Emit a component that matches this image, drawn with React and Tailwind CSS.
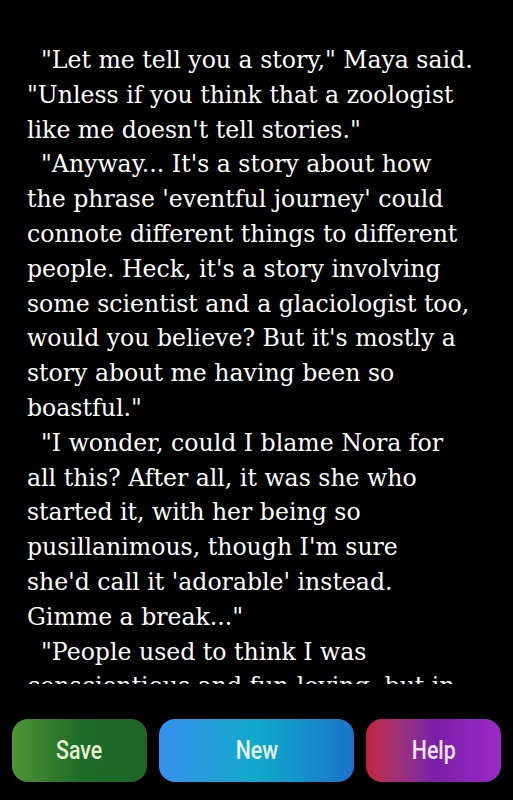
const lines = [
  { text: "\"Let me tell you a story,\" Maya said.", indent: true },
  { text: "\"Unless if you think that a zoologist" },
  { text: "like me doesn't tell stories.\"" },
  { text: "\"Anyway... It's a story about how", indent: true },
  { text: "the phrase 'eventful journey' could" },
  { text: "connote different things to different" },
  { text: "people. Heck, it's a story involving" },
  { text: "some scientist and a glaciologist too," },
  { text: "would you believe? But it's mostly a" },
  { text: "story about me having been so" },
  { text: "boastful.\"" },
  { text: "\"I wonder, could I blame Nora for", indent: true },
  { text: "all this? After all, it was she who" },
  { text: "started it, with her being so" },
  { text: "pusillanimous, though I'm sure" },
  { text: "she'd call it 'adorable' instead." },
  { text: "Gimme a break...\"" },
  { text: "\"People used to think I was", indent: true },
  { text: "conscientious and fun-loving, but in" },
  { text: "reality I was just very good at hiding" },
];

export default function App() {
  return (
    <div className="w-[513px] h-[800px] bg-black flex flex-col overflow-hidden">
      <div className="h-[684px] overflow-hidden pt-[43px] pl-[27px]">
        {lines.map((l, i) => (
          <div
            key={i}
            className={`whitespace-nowrap text-white text-[23.6px] leading-[34.8px] font-['DejaVu_Serif',serif] ${l.indent ? "pl-[14px]" : ""}`}
          >
            {l.text}
          </div>
        ))}
      </div>
      <div className="flex gap-3 px-3 mt-[35px]">
        <button className="w-[135px] h-[63px] rounded-2xl bg-linear-to-r from-[#4f9436] via-[#1e6b28] to-[#1d6526] text-[#e6f5d6] text-[26px] font-medium font-['Roboto',sans-serif]">
          <span className="inline-block scale-x-[0.82]">Save</span>
        </button>
        <button className="flex-1 h-[63px] rounded-2xl bg-linear-to-r from-[#3490ec] via-[#10a9c9] to-[#1c73c9] text-[#e4f6fb] text-[26px] font-medium font-['Roboto',sans-serif]">
          <span className="inline-block scale-x-[0.82]">New</span>
        </button>
        <button className="w-[135px] h-[63px] rounded-2xl bg-linear-to-r from-[#c3213a] via-[#7a1fa9] to-[#9a2ac4] text-[#f6e4f6] text-[26px] font-medium font-['Roboto',sans-serif]">
          <span className="inline-block scale-x-[0.82]">Help</span>
        </button>
      </div>
    </div>
  );
}
